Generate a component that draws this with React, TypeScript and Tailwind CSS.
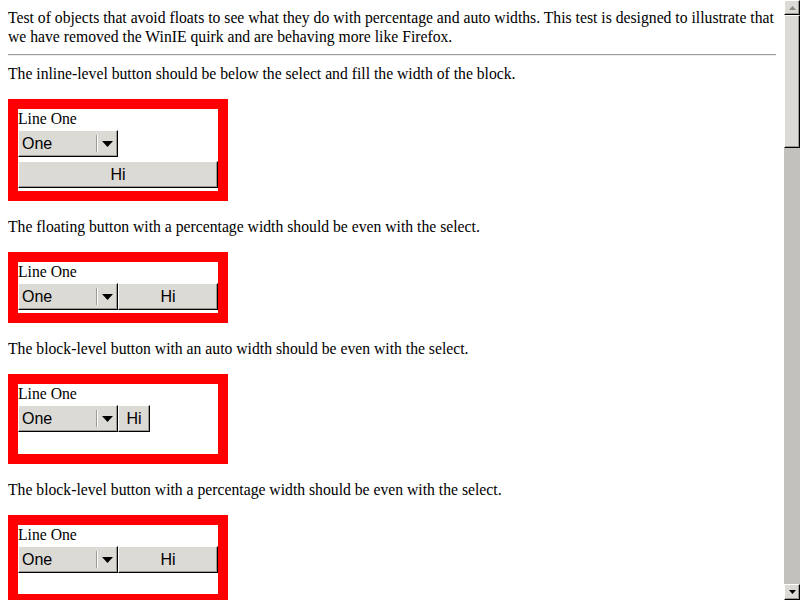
import React from "react";

// Raised grey widget look (GTK-ish form controls)
const RAISED =
  "border border-t-white border-l-white border-r-black border-b-black bg-[#dcdad5] shadow-[inset_-1px_-1px_0_#9d9a94]";

function Select() {
  return (
    <div
      className={`flex h-[27px] w-[100px] shrink-0 items-center font-['Liberation_Sans',Arial,sans-serif] text-[16px] leading-none ${RAISED}`}
    >
      <span className="flex-1 pl-[3px]">One</span>
      <span className="flex h-[17px] w-[2px] shrink-0">
        <span className="w-px bg-[#9d9a94]" />
        <span className="w-px bg-white" />
      </span>
      <span className="flex w-[19px] shrink-0 justify-center">
        <svg width="11" height="6" viewBox="0 0 11 6" aria-hidden>
          <path d="M0 0h11L5.5 6z" fill="#000" />
        </svg>
      </span>
    </div>
  );
}

function Button({ className = "" }: { className?: string }) {
  return (
    <div
      className={`flex h-[27px] shrink-0 items-center justify-center font-['Liberation_Sans',Arial,sans-serif] text-[16px] leading-none ${RAISED} ${className}`}
    >
      Hi
    </div>
  );
}

function Box({ children, className = "" }: { children: React.ReactNode; className?: string }) {
  return (
    <div className={`w-[220px] border-[10px] border-[#ff0000] bg-white ${className}`}>
      <div className="h-[19px]">Line One</div>
      {children}
    </div>
  );
}

function Scrollbar() {
  return (
    <div className="flex h-[600px] w-[16px] shrink-0 flex-col bg-[#c3c1bc]">
      <div className={`flex h-[15px] items-center justify-center ${RAISED}`}>
        <svg width="7" height="4" viewBox="0 0 7 4" aria-hidden>
          <path d="M0 4h7L3.5 0z" fill="#8a8883" />
        </svg>
      </div>
      <div className={`h-[133px] ${RAISED}`} />
      <div className="flex-1" />
      <div className={`flex h-[16px] items-center justify-center ${RAISED}`}>
        <svg width="7" height="4" viewBox="0 0 7 4" aria-hidden>
          <path d="M0 0h7L3.5 4z" fill="#000" />
        </svg>
      </div>
    </div>
  );
}

export default function App() {
  return (
    <div className="flex h-[600px] w-[800px] overflow-hidden bg-white">
      <div className="min-w-0 flex-1 overflow-hidden px-2 pt-2 font-['Liberation_Serif','Times_New_Roman',serif] text-[15.7px] leading-[19px] text-black">
        <p className="whitespace-nowrap">
          Test of objects that avoid floats to see what they do with percentage and auto widths. This test is designed to illustrate that
          <br />
          we have removed the WinIE quirk and are behaving more like Firefox.
        </p>
        <hr className="mt-2 mb-2 h-0 border-t border-b border-t-[#9a9a9a] border-b-[#eeeeee]" />

        <p className="mb-4">The inline-level button should be below the select and fill the width of the block.</p>
        <Box>
          <div className="mt-[2px]">
            <Select />
          </div>
          <Button className="mt-[4px] mb-[3px] w-[200px]" />
        </Box>

        <p className="my-4">The floating button with a percentage width should be even with the select.</p>
        <Box>
          <div className="mt-[2px] mb-[3px] flex">
            <Select />
            <Button className="w-[100px]" />
          </div>
        </Box>

        <p className="my-4">The block-level button with an auto width should be even with the select.</p>
        <Box>
          <div className="mt-[2px] mb-[22px] flex">
            <Select />
            <Button className="w-[32px]" />
          </div>
        </Box>

        <p className="my-4">The block-level button with a percentage width should be even with the select.</p>
        <Box>
          <div className="mt-[2px] mb-[21px] flex">
            <Select />
            <Button className="w-[100px]" />
          </div>
        </Box>
      </div>
      <Scrollbar />
    </div>
  );
}
